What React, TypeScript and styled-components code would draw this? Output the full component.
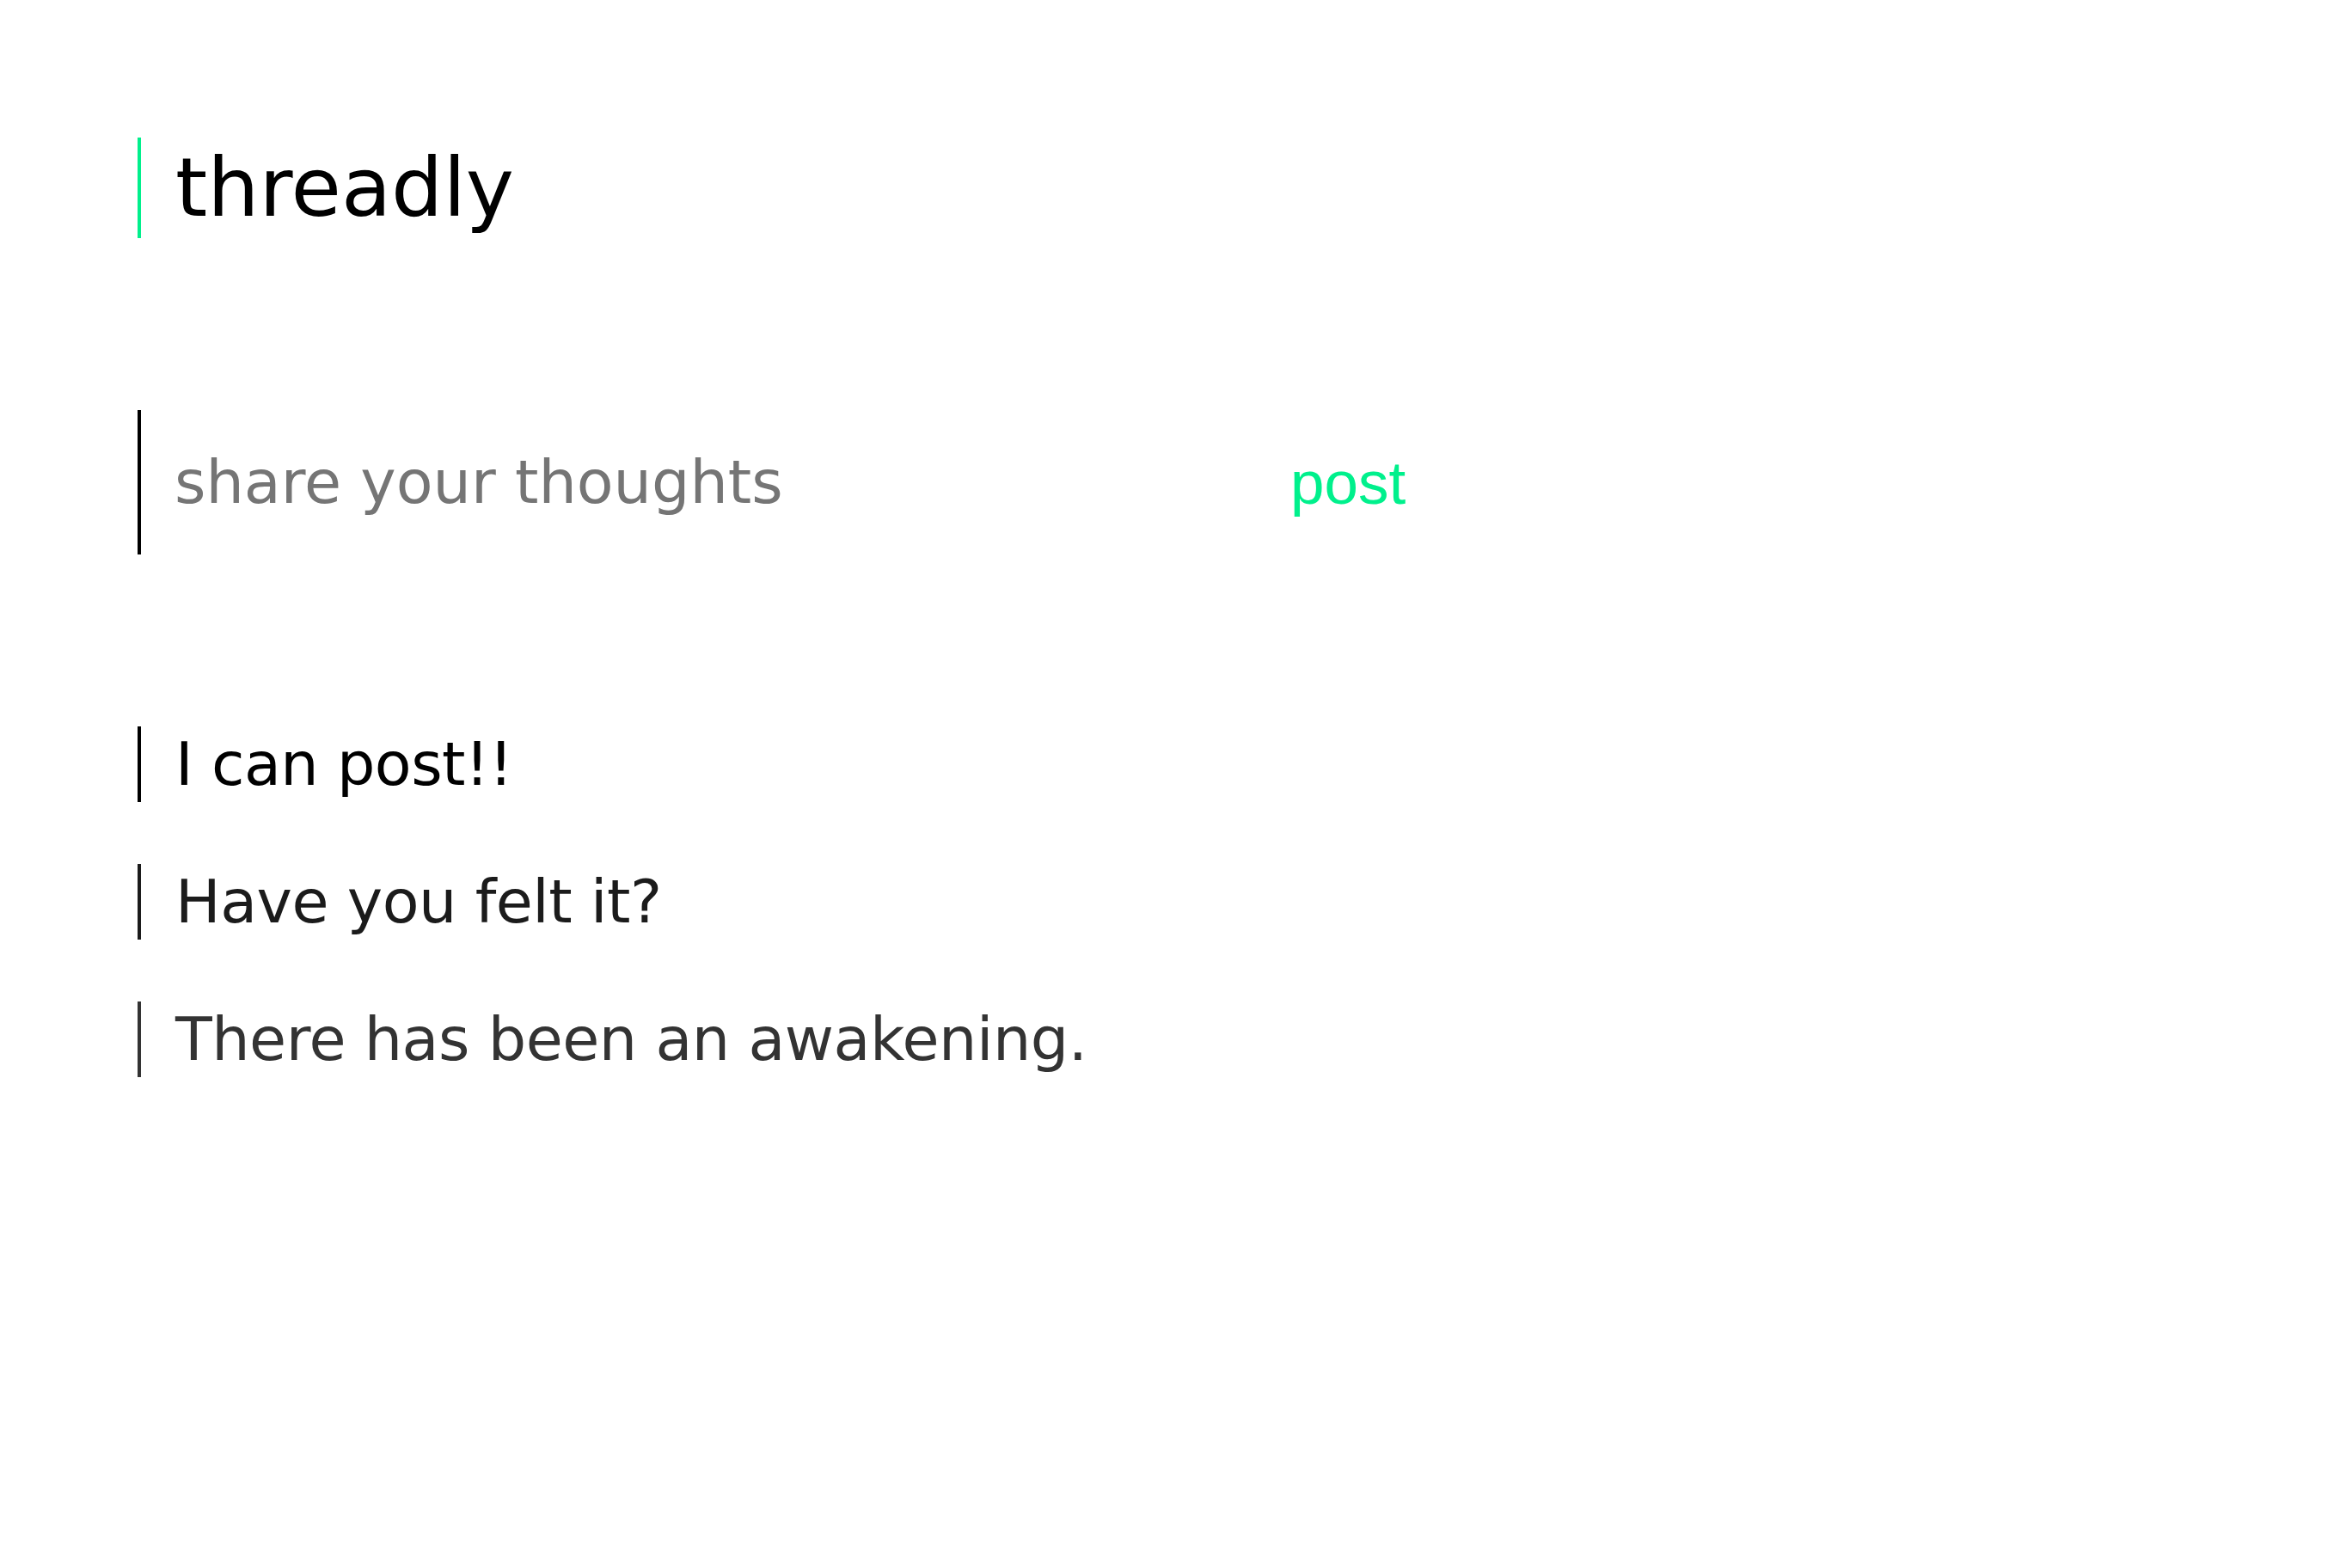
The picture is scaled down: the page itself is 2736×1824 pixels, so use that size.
import React from "react";
import styled, { createGlobalStyle } from "styled-components";

const GREEN = "#00f08c";

const GlobalStyle = createGlobalStyle`
  html, body {
    margin: 0;
    padding: 0;
    background: #ffffff;
  }
  body {
    font-family: "DejaVu Sans", "Liberation Sans", sans-serif;
  }
`;

const Page = styled.main`
  display: flex;
  flex-direction: column;
  padding: 160px 160px;
  box-sizing: border-box;
`;

const Title = styled.h1`
  margin: 0;
  border-left: 4px solid ${GREEN};
  padding-left: 40px;
  font-size: 95px;
  line-height: 117px;
  font-weight: 400;
  color: #000;
  font-family: "DejaVu Sans", sans-serif;
`;

const Composer = styled.form`
  display: flex;
  align-items: center;
  margin-top: 200px;
  height: 168px;
  border-left: 4px solid #000;
`;

const Input = styled.input`
  box-sizing: border-box;
  width: 1337px;
  height: 100%;
  padding: 0 0 0 39px;
  border: none;
  outline: none;
  background: transparent;
  font-family: "DejaVu Sans", sans-serif;
  font-size: 70px;
  color: #000;
  &::placeholder {
    color: #757575;
  }
`;

const PostButton = styled.button`
  border: none;
  background: none;
  padding: 0;
  margin: 0;
  font-family: "Liberation Sans", Arial, sans-serif;
  font-size: 71px;
  line-height: 1;
  color: ${GREEN};
  cursor: pointer;
`;

const PostList = styled.ul`
  list-style: none;
  margin: 200px 0 0 0;
  padding: 0;
  display: flex;
  flex-direction: column;
  gap: 72px;
`;

const PostItem = styled.li<{ $tone: string }>`
  border-left: 4px solid ${(p) => p.$tone};
  padding-left: 40px;
  height: 88px;
  font-size: 70px;
  line-height: 88px;
  letter-spacing: -0.5px;
  color: ${(p) => p.$tone};
  font-family: "DejaVu Sans", sans-serif;
  white-space: nowrap;
`;

const posts = [
  { text: "I can post!!", tone: "#000000" },
  { text: "Have you felt it?", tone: "#1b1b1b" },
  { text: "There has been an awakening.", tone: "#333333" },
];

export default function App() {
  return (
    <>
      <GlobalStyle />
      <Page>
        <Title>threadly</Title>
        <Composer onSubmit={(e) => e.preventDefault()}>
          <Input placeholder="share your thoughts" />
          <PostButton type="submit">post</PostButton>
        </Composer>
        <PostList>
          {posts.map((p) => (
            <PostItem key={p.text} $tone={p.tone}>
              {p.text}
            </PostItem>
          ))}
        </PostList>
      </Page>
    </>
  );
}
